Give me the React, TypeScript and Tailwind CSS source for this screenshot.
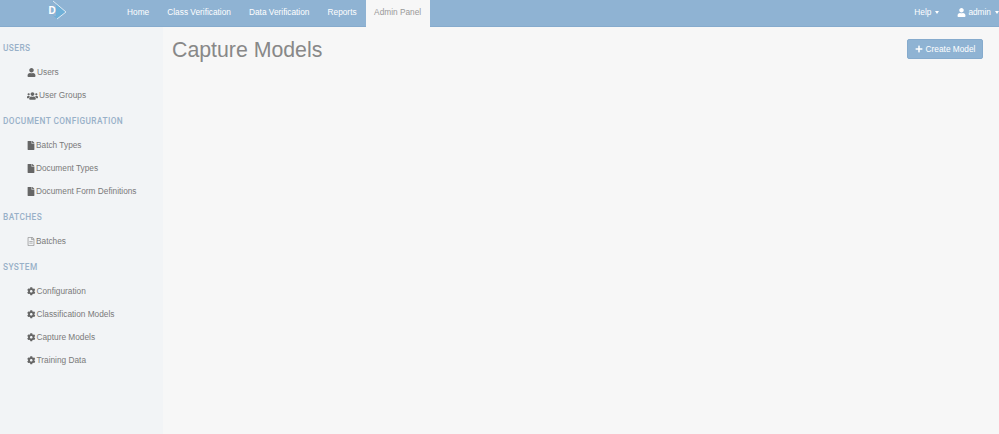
import { FaCog, FaFile, FaRegFileAlt, FaUser, FaUsers, FaPlus } from "react-icons/fa";
import type { ReactNode } from "react";

const navItems = ["Home", "Class Verification", "Data Verification", "Reports"];

type SideItem = { label: string; icon: ReactNode };

const userIcon = <FaUser className="w-[9px] h-[9px]" />;
const usersIcon = <FaUsers className="w-[11px] h-[10px]" />;
const fileIcon = <FaFile className="w-[8px] h-[9px]" />;
const batchIcon = <FaRegFileAlt className="w-[8px] h-[9px] opacity-60" />;
const cogIcon = <FaCog className="w-[8.5px] h-[8.5px]" />;

const sections: { title: string; items: SideItem[] }[] = [
  {
    title: "USERS",
    items: [
      { label: "Users", icon: userIcon },
      { label: "User Groups", icon: usersIcon },
    ],
  },
  {
    title: "DOCUMENT CONFIGURATION",
    items: [
      { label: "Batch Types", icon: fileIcon },
      { label: "Document Types", icon: fileIcon },
      { label: "Document Form Definitions", icon: fileIcon },
    ],
  },
  {
    title: "BATCHES",
    items: [{ label: "Batches", icon: batchIcon }],
  },
  {
    title: "SYSTEM",
    items: [
      { label: "Configuration", icon: cogIcon },
      { label: "Classification Models", icon: cogIcon },
      { label: "Capture Models", icon: cogIcon },
      { label: "Training Data", icon: cogIcon },
    ],
  },
];

function Caret() {
  return (
    <span className="ml-[4px] inline-block w-0 h-0 align-middle border-x-[2.5px] border-x-transparent border-t-[3px] border-t-white" />
  );
}

function Logo() {
  return (
    <svg width="22" height="20" viewBox="0 0 22 20" className="block">
      <path d="M7 1 L20 12 L11 19 L1 10 Z" fill="#6fb0d8" />
      <path d="M1 10 L7 1 L10 4 L10 16 L8 16 Z" fill="#8fb3d3" />
      <path
        d="M7 1 L20 12 L11 19"
        fill="none"
        stroke="#dfeaf3"
        strokeWidth="1"
      />
      <text
        x="2.5"
        y="14"
        fontSize="10"
        fontWeight="700"
        fill="#ffffff"
        fontFamily="'Liberation Sans', sans-serif"
      >
        D
      </text>
    </svg>
  );
}

export default function App() {
  return (
    <div className="w-full h-[434px] overflow-hidden flex flex-col bg-[#f7f7f7] font-['Liberation_Sans',Arial,sans-serif]">
      <header className="h-[27px] shrink-0 flex items-stretch bg-[#8fb3d3] border-b border-[#86abcd] text-white text-[8.3px]">
        <div className="w-[118px] pl-[46px] shrink-0">
          <Logo />
        </div>
        <nav className="flex items-stretch">
          {navItems.map((item) => (
            <a key={item} className="px-[9.05px] flex items-center pb-[2px]">
              {item}
            </a>
          ))}
          <a className="w-[64px] h-[27px] justify-center bg-[#f7f7f7] text-[#999999] flex items-center pb-[2px]">
            Admin Panel
          </a>
        </nav>
        <div className="ml-auto flex items-center pb-[2px]">
          <span className="flex items-center">
            Help
            <Caret />
          </span>
          <span className="ml-[18px] flex items-center">
            <FaUser className="w-[9px] h-[9px] mr-[2px]" />
            admin
            <Caret />
          </span>
        </div>
      </header>

      <div className="flex-1 flex min-h-0">
        <aside className="w-[163px] shrink-0 bg-[#f2f4f6] pl-[3px] pt-[15px]">
          {sections.map((section) => (
            <div key={section.title} className="mb-[8px]">
              <h3 className="h-[12px] leading-[12px] font-['Roboto',sans-serif] text-[8.3px] font-medium tracking-[0.42px] text-[#98b0c8]">
                {section.title}
              </h3>
              <ul className="mt-[7px]">
                {section.items.map((item) => (
                  <li
                    key={item.label}
                    className="h-[23px] pl-[24px] flex items-center text-[8.3px] text-[#7a7a7a]"
                  >
                    <span className="mr-[1px] flex items-center text-[#666666]">
                      {item.icon}
                    </span>
                    {item.label}
                  </li>
                ))}
              </ul>
            </div>
          ))}
        </aside>

        <main className="flex-1 flex items-start justify-between pl-[9px] pr-[16px] pt-[11px]">
          <h1 className="text-[21.3px] leading-[24px] text-[#888888]">Capture Models</h1>
          <button className="mt-[1px] h-[20px] w-[76px] flex items-center justify-center rounded-[2px] bg-[#8fb3d3] border border-[#86abcd] text-white text-[8.3px]">
            <FaPlus className="w-[8px] h-[8px] mr-[3px]" />
            Create Model
          </button>
        </main>
      </div>
    </div>
  );
}
